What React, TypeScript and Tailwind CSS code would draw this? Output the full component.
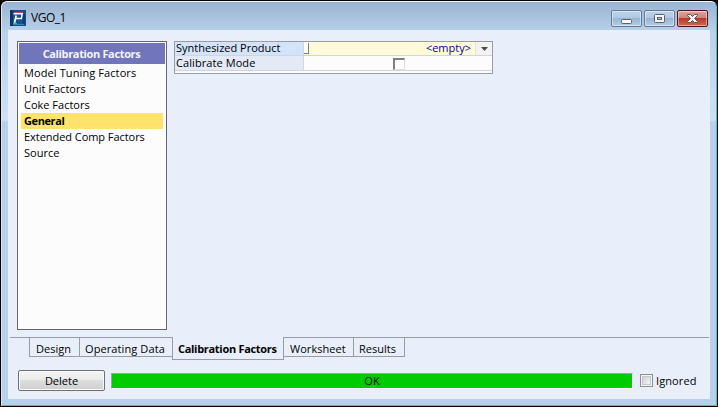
import React from "react";

const items: [string, string][] = [
  ["Model Tuning Factors", "tracking-[0.1px]"],
  ["Unit Factors", ""],
  ["Coke Factors", ""],
  ["General", "bg-[#ffe36c] font-bold tracking-[-0.4px]"],
  ["Extended Comp Factors", "tracking-[-0.05px]"],
  ["Source", ""],
];

function AppIcon() {
  return (
    <svg width="16" height="16" viewBox="0 0 16 16" className="shrink-0">
      <rect width="16" height="16" fill="#17508a" />
      <rect x="0" y="0" width="3" height="16" fill="#0c3468" />
      <rect x="3" y="14" width="11" height="1" fill="#2a86b0" />
      <rect x="13" y="4" width="2" height="10" fill="#103c74" />
      <path d="M4 2.5h9" stroke="#cf4a58" />
      <path d="M3.5 3.8h8.7l-.8 4.7H5.5" fill="none" stroke="#f8fbff" strokeWidth="1.5" />
      <path d="M6.2 5.5 4.5 12.8" stroke="#f8fbff" strokeWidth="1.8" />
      <path d="M3 13.5h4" stroke="#46b5a4" />
    </svg>
  );
}

function CaptionButton({ close, children }: { close?: boolean; children: React.ReactNode }) {
  return (
    <div
      className={
        "flex h-[17px] w-[31px] items-center justify-center rounded-[2px] border shadow-[inset_0_0_0_1px_rgba(255,255,255,0.45)] " +
        (close
          ? "border-[#4b1620] bg-[linear-gradient(#dfa39b_0%,#d3837a_45%,#b83a28_50%,#cf6a50_100%)]"
          : "border-[#63799a] bg-[linear-gradient(#bfd3ea_0%,#b0c8e2_45%,#98b5d4_50%,#b3cde8_100%)]")
      }
    >
      {children}
    </div>
  );
}

export default function App() {
  return (
    <div className="h-[407px] w-[718px] overflow-hidden bg-black p-px font-['Open_Sans','Noto_Sans',sans-serif] text-[11px] leading-[14px] whitespace-nowrap text-black">
      <div className="flex h-[405px] w-[716px] flex-col rounded-t-[6px] border-t border-r border-b border-l border-t-[#f3f8fc] border-r-[#35c5e6] border-b-[#35c5e6] border-l-[#dce8f4] bg-[linear-gradient(#9ab4d2_0px,#b9d1ea_30px,#d0e0f2_118px,#b9d0ea_120px)] px-[6px] pb-[6px]">
        <header className="flex h-7 shrink-0 items-start pl-[2px]">
          <div className="pt-2"><AppIcon /></div>
          <span className="mt-2 ml-[5px] text-[12px] leading-[15px] tracking-[-0.5px]">VGO_1</span>
          <div className="mt-2 mr-[2px] ml-auto flex gap-[2px]">
            <CaptionButton>
              <svg width="13" height="13" viewBox="0 0 13 13"><rect x="1.5" y="7.5" width="10" height="4" rx="1" fill="#f7f7f7" stroke="#59616d" /></svg>
            </CaptionButton>
            <CaptionButton>
              <svg width="13" height="13" viewBox="0 0 13 13"><rect x="1.5" y="2.5" width="10" height="8" rx="1" fill="#f7f7f7" stroke="#59616d" /><rect x="4.5" y="5.5" width="4" height="2" fill="#a9c2df" stroke="#59616d" /></svg>
            </CaptionButton>
            <CaptionButton close>
              <svg width="13" height="11" viewBox="0 0 13 11"><path d="M1.5 1.5h3l2 2 2-2h3v1l-3 3 3 3v1h-3l-2-2-2 2h-3v-1l3-3-3-3z" fill="#f5f5f5" stroke="#58545c" /></svg>
            </CaptionButton>
          </div>
        </header>

        <main className="flex h-[369px] w-[702px] flex-col bg-[#e8effa]">
          <div className="flex h-[307px] items-start gap-[7px] pt-[11px] pl-[9px]">
            <nav className="h-[289px] w-[150px] border border-[#66666a] bg-[#fcfcfc] p-px">
              <div className="flex h-[21px] items-center justify-center bg-[#7075bc] pt-px pr-px font-bold tracking-[-0.35px] text-[#f4f4ff]">
                Calibration Factors
              </div>
              <ul className="mx-[2px] mt-px">
                {items.map(([label, style]) => (
                  <li key={label} className={"h-4 pl-[3px] leading-[16px] " + style}>
                    {label}
                  </li>
                ))}
              </ul>
            </nav>

            <section className="h-[33px] w-[319px] border border-[#9a9ca0] bg-[#fcfcfc]">
              <div className="flex h-[14px] border-b border-[#cdd6e6]">
                <div className="w-[129px] border-r border-[#cdd6e6] bg-[#d3e3fa] pl-px leading-[12px]">Synthesized Product</div>
                <div className="flex flex-1 bg-[#fffbd8]">
                  <div className="mt-px h-[11px] w-[5px] border-r border-b border-[#808080] bg-white" />
                  <div className="flex-1 pr-1 text-right leading-[12px] text-[#0000b4]">&lt;empty&gt;</div>
                </div>
                <div className="flex w-[17px] items-center justify-center border-l border-[#dfe4ec] bg-[#f3f3f3]">
                  <svg width="7" height="4" viewBox="0 0 7 4"><path d="M0 0h7L3.5 4z" fill="#4b4b4b" /></svg>
                </div>
              </div>
              <div className="flex h-[15px] border-b border-[#cdd6e6]">
                <div className="w-[129px] border-r border-[#cdd6e6] bg-[#e3eaf6] pl-px leading-[14px] tracking-[0.08px]">Calibrate Mode</div>
                <div className="flex flex-1 items-center pt-px pl-[89px]">
                  <div className="h-[12px] w-[12px] border-t-2 border-r border-b border-l-2 border-t-[#808080] border-r-[#e0e0e0] border-b-[#e0e0e0] border-l-[#808080] bg-white" />
                </div>
              </div>
            </section>
          </div>

          <div className="flex h-[23px] items-start pr-px pl-[2px]">
            <div className="h-px w-[19px] bg-[#9a9ca3]" />
            <div className="flex h-[20px] w-[51px] border border-t-[#9a9ca3] border-[#9a9ca3] pt-[4px] pl-[6px]">Design</div>
            <div className="flex h-[20px] w-[92px] border-t border-b border-[#9a9ca3] pt-[4px] pl-[5px] tracking-[0.1px]">Operating Data</div>
            <div className="flex h-[23px] w-[112px] border-r border-b border-l border-[#9a9ca3] pt-[5px] pl-[5px] font-bold tracking-[-0.3px]">Calibration Factors</div>
            <div className="flex h-[20px] w-[70px] border-t border-r border-b border-[#9a9ca3] pt-[4px] pl-[6px] tracking-[0.05px]">Worksheet</div>
            <div className="flex h-[20px] w-[51px] border-t border-r border-b border-[#9a9ca3] pt-[4px] pl-[5px]">Results</div>
            <div className="h-px flex-1 bg-[#9a9ca3]" />
          </div>

          <footer className="flex items-start pt-[10px] pl-[10px]">
            <button className="h-[21px] w-[87px] rounded-[2px] border border-[#707070] bg-[linear-gradient(#f3f3f3_0%,#ebebeb_48%,#dddddd_50%,#cfcfcf_100%)] shadow-[inset_0_0_0_1px_#fafafa]">Delete</button>
            <div className="mt-[3px] ml-[6px] flex h-[16px] w-[522px] items-center justify-center border border-t-[#a0a0a0] border-r-white border-b-white border-l-[#a0a0a0] bg-[#00cc00]">OK</div>
            <div className="mt-1 ml-[7px] h-[13px] w-[13px] border border-[#8e8f8f] bg-[#f4f4f4] p-px">
              <div className="h-full w-full border border-[#c3c7cc] bg-[linear-gradient(135deg,#cdd1d6,#f6f6f6)]" />
            </div>
            <span className="mt-1 ml-[3px] tracking-[0.1px]">Ignored</span>
          </footer>
        </main>
      </div>
    </div>
  );
}
